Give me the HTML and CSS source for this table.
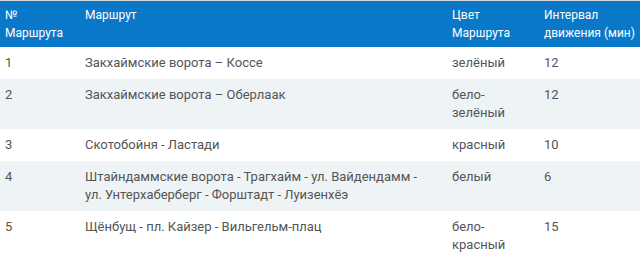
FILE: index.html
```html
<!DOCTYPE html>
<html lang="ru">
<head>
    <meta charset="UTF-8">
    <title>Маршруты</title>
    <link rel="stylesheet" href="styles.css">
</head>
<body>

<table class="routes">
    <thead>
        <tr>
            <th class="col-num">№<br>Маршрута</th>
            <th class="col-route">Маршрут</th>
            <th class="col-color">Цвет<br>Маршрута</th>
            <th class="col-interval">Интервал<br>движения (мин)</th>
        </tr>
    </thead>
    <tbody>
        <tr>
            <td>1</td>
            <td>Закхаймские ворота – Коссе</td>
            <td>зелёный</td>
            <td>12</td>
        </tr>
        <tr>
            <td>2</td>
            <td>Закхаймские ворота – Оберлаак</td>
            <td>бело-<br>зелёный</td>
            <td>12</td>
        </tr>
        <tr>
            <td>3</td>
            <td>Скотобойня - Ластади</td>
            <td>красный</td>
            <td>10</td>
        </tr>
        <tr>
            <td>4</td>
            <td>Штайндаммские ворота - Трагхайм - ул. Вайдендамм -<br>ул. Унтерхаберберг - Форштадт - Луизенхёэ</td>
            <td>белый</td>
            <td>6</td>
        </tr>
        <tr>
            <td>5</td>
            <td>Щёнбущ - пл. Кайзер - Вильгельм-плац</td>
            <td>бело-<br>красный</td>
            <td>15</td>
        </tr>
    </tbody>
</table>

</body>
</html>
```

FILE: styles.css
```css
body {
    margin: 0;
    padding: 0;
    font-family: Roboto, Arial, sans-serif;
    font-size: 13px;
    color: #555;
    background: #fff;
}

/* Table */
.routes {
    border-collapse: collapse;
    table-layout: fixed;
    width: 640px;
    border-top: 1px solid #d4d8dc;
}

.routes th,
.routes td {
    text-align: left;
    vertical-align: top;
    line-height: 18px;
}

.routes th {
    background-color: #0a78c8;
    color: #fff;
    font-size: 12px;
    font-weight: normal;
    padding: 5px 5px;
}

.routes td {
    padding: 7px 5px;
}

.routes tbody tr:nth-child(even) {
    background-color: #eef3f6;
}

.col-num { width: 70px; }
.col-route { width: 357px; }
.col-color { width: 82px; }
.col-interval { width: 91px; }
```
